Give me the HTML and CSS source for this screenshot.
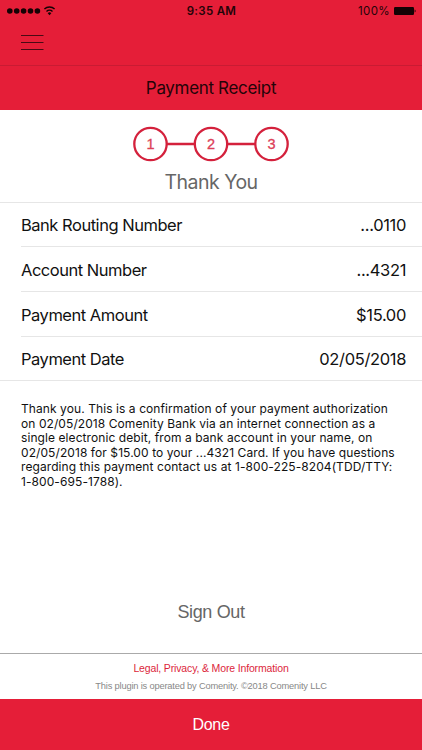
FILE: index.html
```html
<!DOCTYPE html>
<html lang="en">
  <head>
    <meta charset="UTF-8" />
    <meta name="viewport" content="width=device-width, initial-scale=1.0" />
    <title>Payment Receipt</title>
    <link rel="stylesheet" href="styles.css">
  </head>
  <body>
    <header class="header">
      <!-- Status bar -->
      <div class="status">
        <div class="status-left">
          <svg width="50" height="14" viewBox="0 0 50 14">
            <circle cx="2.8" cy="7" r="2.8" />
            <circle cx="9.7" cy="7" r="2.8" />
            <circle cx="16.6" cy="7" r="2.8" />
            <circle cx="23.5" cy="7" r="2.8" />
            <circle cx="30.4" cy="7" r="2.8" />
            <g fill="none" stroke="#140204" stroke-width="1.4">
              <path d="M37.4 5.1a7.2 7.2 0 0 1 10.2 0" />
              <path d="M39.5 7.4a4.3 4.3 0 0 1 6 0" />
            </g>
            <path d="M40.7 9.2a2.6 2.6 0 0 1 3.6 0L42.5 11.3z" />
          </svg>
        </div>
        <span class="time">9:35 AM</span>
        <div class="status-right">
          <span class="percent">100%</span>
          <svg width="22" height="8" viewBox="0 0 22 8">
            <rect x="0" y="0" width="20" height="8" rx="1.2" />
            <path d="M20.6 2.5a1.6 1.6 0 0 1 0 3z" />
          </svg>
        </div>
      </div>

      <div class="nav">
        <svg class="menu" width="23" height="16" viewBox="0 0 23 16">
          <path d="M0 1.5h22.5M0 8.5h22.5M0 15.5h22.5" stroke="#4a0a14" />
        </svg>
      </div>
      <h1 class="title">Payment Receipt</h1>
    </header>

    <!-- Steps -->
    <section class="progress">
      <svg width="156" height="36" viewBox="0 0 156 36">
        <g fill="none" stroke="#d4213c" stroke-width="2.3">
          <circle cx="17.5" cy="18" r="16.2" />
          <circle cx="78" cy="18" r="16.2" />
          <circle cx="138.5" cy="18" r="16.2" />
          <path d="M33.7 18H61.8M94.2 18h28.1" />
        </g>
        <g class="step-num">
          <text x="17.5" y="23">1</text>
          <text x="78" y="23">2</text>
          <text x="138.5" y="23">3</text>
        </g>
      </svg>
      <h2 class="thanks">Thank You</h2>
    </section>

    <!-- Receipt rows -->
    <ul class="rows">
      <li><span>Bank Routing Number</span><span class="value">...0110</span></li>
      <li><span>Account Number</span><span class="value">...4321</span></li>
      <li><span>Payment Amount</span><span class="value">$15.00</span></li>
      <li><span>Payment Date</span><span class="value">02/05/2018</span></li>
    </ul>

    <p class="message">
      Thank you. This is a confirmation of your payment authorization<br />
      on 02/05/2018 Comenity Bank via an internet connection as a<br />
      single electronic debit, from a bank account in your name, on<br />
      02/05/2018 for $15.00 to your ...4321 Card. If you have questions<br />
      regarding this payment contact us at 1-800-225-8204(TDD/TTY:<br />
      1-800-695-1788).
    </p>

    <a class="signout">Sign Out</a>

    <footer class="footer">
      <a class="legal">Legal, Privacy, &amp; More Information</a>
      <span class="plugin">This plugin is operated by Comenity. ©2018 Comenity LLC</span>
    </footer>
    <button class="done" type="button">Done</button>
  </body>
</html>
```
FILE: styles.css
```css
* {
  box-sizing: border-box;
}

body {
  margin: 0;
  height: 750px;
  display: flex;
  flex-direction: column;
  overflow: hidden;
  background-color: #fff;
  color: #111;
  font-family: Inter, "Liberation Sans", sans-serif;
}

/* Header */
.header {
  height: 110px;
  background-color: #e51e38;
  color: #240408;
}

.status {
  display: grid;
  grid-template-columns: 1fr auto 1fr;
  align-items: center;
  height: 22px;
  padding: 0 6px 0 7px;
  fill: #140204;
  font-size: 11.5px;
}

.status-left,
.status-right {
  display: flex;
  align-items: center;
}

.status-right {
  justify-content: flex-end;
  gap: 4px;
}

.time {
  font-weight: 600;
  letter-spacing: 0.3px;
}

.percent {
  letter-spacing: 0.4px;
}

.nav {
  height: 44px;
  padding: 12px 0 0 21px;
  border-bottom: 1px solid #c91b33;
}

.menu {
  display: block;
}

.title {
  margin: 0;
  font-size: 17px;
  font-weight: 400;
  line-height: 45px;
  letter-spacing: -0.33px;
  text-align: center;
}

/* Steps */
.progress {
  display: flex;
  flex-direction: column;
  align-items: center;
  height: 92px;
  padding-top: 16px;
}

.step-num {
  fill: #dc4058;
  font-family: "Liberation Sans", sans-serif;
  font-size: 14.5px;
  text-anchor: middle;
  stroke: #dc4058;
  stroke-width: 0.3px;
}

.thanks {
  margin: 8px 0 0;
  color: #666;
  font-size: 19.5px;
  font-weight: 400;
  line-height: 25px;
  letter-spacing: -0.5px;
}

/* Receipt rows */
.rows {
  margin: 0;
  padding: 0 0 0 21px;
  height: 179px;
  display: grid;
  grid-template-rows: 43px 45px 45px 44px;
  list-style-type: none;
  border-top: 1px solid #e6e6e6;
  border-bottom: 1px solid #e6e6e6;
  font-size: 16.5px;
  letter-spacing: -0.48px;
}

.rows li {
  display: flex;
  align-items: center;
  justify-content: space-between;
  padding: 1px 16px 0 0;
}

.rows li + li {
  border-top: 1px solid #e6e6e6;
}

.value {
  letter-spacing: -0.35px;
}

.message {
  margin: 21px 0 0 21px;
  font-size: 12px;
  line-height: 14.6px;
  letter-spacing: 0.08px;
  white-space: nowrap;
}

.signout {
  margin-top: auto;
  margin-bottom: 29px;
  color: #666;
  font-family: "Liberation Sans", sans-serif;
  font-size: 18px;
  line-height: 24px;
  letter-spacing: -0.35px;
  text-align: center;
}

/* Footer */
.footer {
  display: flex;
  flex-direction: column;
  align-items: center;
  height: 46px;
  padding-top: 7px;
  border-top: 1px solid #aaa;
  font-family: "Liberation Sans", sans-serif;
}

.legal {
  color: #dc1f3b;
  font-size: 10.5px;
  line-height: 14px;
  letter-spacing: -0.15px;
}

.plugin {
  margin-top: 4px;
  color: #888;
  font-size: 9.3px;
  line-height: 14px;
  letter-spacing: -0.18px;
}

.done {
  height: 51px;
  border: 0;
  background-color: #e51e38;
  color: #fff;
  font-family: "Liberation Sans", sans-serif;
  font-size: 16px;
  letter-spacing: -0.3px;
}
```
